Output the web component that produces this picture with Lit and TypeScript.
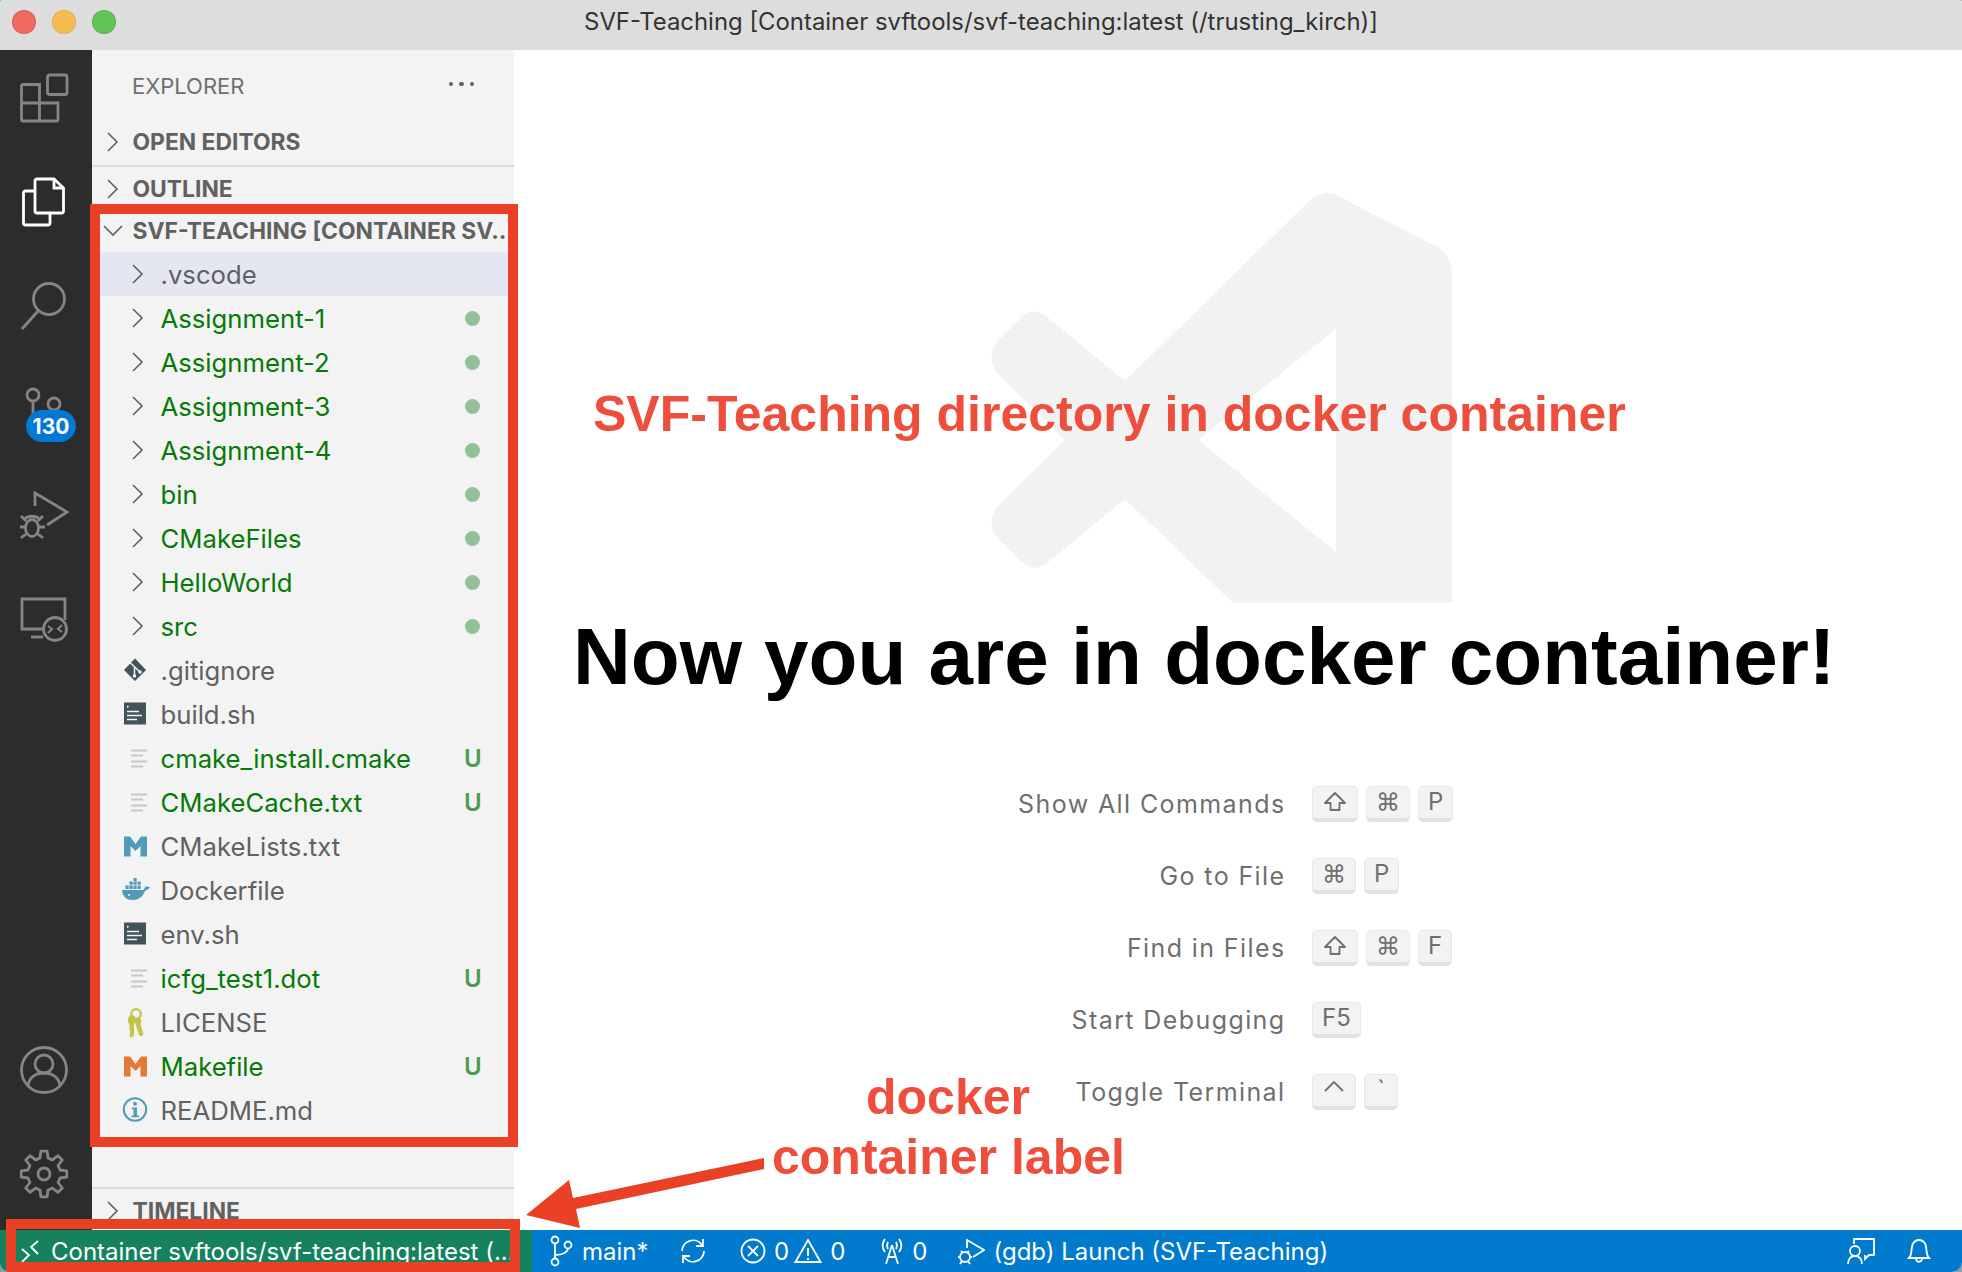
import { LitElement, html, css, svg } from "lit";
import { customElement } from "lit/decorators.js";

const chevR = html`<svg class="chev" width="14" height="22" viewBox="0 0 14 22"><path d="M2 2l9 9-9 9" fill="none" stroke="#616161" stroke-width="1.6"/></svg>`;
const chevD = html`<svg class="chev cd" width="20" height="14" viewBox="0 0 20 14"><path d="M1 2l9 9 9-9" fill="none" stroke="#616161" stroke-width="1.6"/></svg>`;

const iGit = svg`<path d="M16 4.500L27 16 16 27 5 16z" fill="#41535b"/><path d="M11.500 9l9.500 9M15.500 13v9" stroke="#f3f3f3" stroke-width="1.500" fill="none"/><circle cx="15.500" cy="22" r="1.800" fill="#f3f3f3"/><circle cx="21" cy="18" r="1.800" fill="#f3f3f3"/>`;
const iShell = svg`<rect x="5" y="4.500" width="22" height="22" fill="#41535b"/><path d="M8 7.500l2.500 1.300L8 10z" fill="#f3f3f3"/><path d="M8 13.500h12M8 17.500h15M8 21.500h10" stroke="#f3f3f3" stroke-width="1.500"/>`;
const iLines = svg`<path d="M12 8.500h16M12 13.500h12M12 19.500h16M12 24.500h12" stroke="#c8c8c8" stroke-width="1.800"/>`;
const iM = (c: string) => svg`<path d="M5 26.500V6.500h6L16.500 14 22 6.500h6v20h-6.500V16l-5 5-5-5v10.500z" fill="${c}"/>`;
const iDocker = svg`<path d="M3 16h21c1 0 1.800-2.800 2.300-3.300 1.300-.6 3.300-.2 4.700.8-1.200 1.600-2.700 2.500-4.700 3-1.900 5-6 9.500-12.300 9.500C8 26 3.500 23 3 16z" fill="#519aba"/><path d="M6.500 11.500h3.200v3.500H6.500zM10.500 11.500h3.200v3.500h-3.200zM14.500 11.500h3.200v3.500h-3.200zM18.500 11.500h3.200v3.500h-3.200zM10.500 7.500h3.200v3.300h-3.200zM14.500 7.500h3.200v3.300h-3.200zM18.500 7.500h3.200v3.300h-3.200zM14.500 4h3.200v3h-3.200z" fill="#519aba"/><circle cx="10" cy="21" r="1" fill="#f3f3f3"/>`;
const iKey = svg`<circle cx="17" cy="8" r="4.800" fill="none" stroke="#c4c446" stroke-width="2.200"/><path d="M9 14c0-3 2-5 4-5s3.500 2 3.500 5c0 2-1 3-1.500 4v11l-2.500 3-2-2v-1l1-1-1-1 1-1.500-1-1.500v-5C9.500 17 9 16 9 14z" fill="#c4c446"/><path d="M16 14c1-3 5-3 6 0 .5 1.500 0 3-.5 4l3 10-2 2.500-2.500-1.500-3.500-11c-.5-1-1-2.500-.5-4z" fill="#c4c446"/>`;
const iInfo = svg`<circle cx="16" cy="15.500" r="11.200" fill="none" stroke="#519aba" stroke-width="2"/><circle cx="16" cy="9.800" r="2" fill="#519aba"/><path d="M12.800 13.500H18v8h2v1.800h-7.500v-1.800h2v-6.200h-1.700z" fill="#519aba"/>`;
const ic = (p: unknown) => html`<svg class="ficon" width="32" height="32" viewBox="0 0 32 32">${p}</svg>`;

const gearPath = (() => {
  const n = 8, ro = 23, ri = 16.500, cx = 24, cy = 24;
  const pts: string[] = [];
  for (let i = 0; i < n; i++) {
    const a = (i * 2 * Math.PI) / n - Math.PI / 2;
    const s = Math.PI / n;
    const p = (r: number, t: number) => `${(cx + r * Math.cos(t)).toFixed(1)} ${(cy + r * Math.sin(t)).toFixed(1)}`;
    pts.push(p(ri, a - s * 0.62), p(ro, a - s * 0.34), p(ro, a + s * 0.34), p(ri, a + s * 0.62));
  }
  return "M" + pts.join("L") + "Z";
})();

const shiftI = html`<svg width="26" height="24" viewBox="0 0 26 24"><path d="M13 3L3 13h5.500v7h9v-7H23z" fill="none" stroke="#6f6f6f" stroke-width="1.800" stroke-linejoin="round"/></svg>`;
const ctrlI = html`<svg width="24" height="24" viewBox="0 0 24 24"><path d="M3 13l9-9 9 9" fill="none" stroke="#6f6f6f" stroke-width="1.800"/></svg>`;

type Row = { n: string; folder?: boolean; icon?: unknown; g?: boolean; d?: "dot" | "U"; sel?: boolean };
const rows: Row[] = [
  { n: ".vscode", folder: true, sel: true },
  { n: "Assignment-1", folder: true, g: true, d: "dot" },
  { n: "Assignment-2", folder: true, g: true, d: "dot" },
  { n: "Assignment-3", folder: true, g: true, d: "dot" },
  { n: "Assignment-4", folder: true, g: true, d: "dot" },
  { n: "bin", folder: true, g: true, d: "dot" },
  { n: "CMakeFiles", folder: true, g: true, d: "dot" },
  { n: "HelloWorld", folder: true, g: true, d: "dot" },
  { n: "src", folder: true, g: true, d: "dot" },
  { n: ".gitignore", icon: iGit },
  { n: "build.sh", icon: iShell },
  { n: "cmake_install.cmake", icon: iLines, g: true, d: "U" },
  { n: "CMakeCache.txt", icon: iLines, g: true, d: "U" },
  { n: "CMakeLists.txt", icon: iM("#519aba") },
  { n: "Dockerfile", icon: iDocker },
  { n: "env.sh", icon: iShell },
  { n: "icfg_test1.dot", icon: iLines, g: true, d: "U" },
  { n: "LICENSE", icon: iKey },
  { n: "Makefile", icon: iM("#e37933"), g: true, d: "U" },
  { n: "README.md", icon: iInfo },
];

const shortcuts: [string, unknown[]][] = [
  ["Show All Commands", [shiftI, "⌘", "P"]],
  ["Go to File", ["⌘", "P"]],
  ["Find in Files", [shiftI, "⌘", "F"]],
  ["Start Debugging", ["F5"]],
  ["Toggle Terminal", [ctrlI, "`"]],
];

@customElement("app-root")
export class AppRoot extends LitElement {
  static styles = css`
    :host { display: block; width: 1962px; height: 1272px; background: #9a9a9a; overflow: hidden; }
    * { box-sizing: border-box; }
    .win { position: relative; width: 1962px; height: 1272px; display: flex; flex-direction: column; overflow: hidden; background: #fff;
      border-radius: 3px 3px 10px 10px; font-family: Inter, "Liberation Sans", sans-serif; color: #616161; }
    .title { height: 50px; flex: none; background: #dddddd; display: flex; align-items: center; justify-content: center; position: relative; font-size: 23.900px; color: #333; padding-bottom: 8px; }
    .lights { position: absolute; left: 12px; top: 10px; display: flex; gap: 16px; }
    .lights i { width: 24px; height: 24px; border-radius: 50%; display: block; box-shadow: inset 0 0 0 1px rgba(0,0,0,.1); }
    .l1 { background: #ee6a5f; }
    .l2 { background: #f5bd4f; }
    .l3 { background: #61c454; }
    .main { flex: 1; display: flex; min-height: 0; }
    .act { width: 92px; flex: none; background: #2c2c2c; display: flex; flex-direction: column; justify-content: space-between; padding: 0 4px 8px 0; }
    .act .grp { display: flex; flex-direction: column; gap: 8.200px; }
    .act .bot { gap: 8px; }
    .slot { height: 96px; display: flex; align-items: center; justify-content: center; position: relative; }
    .slot svg { fill: none; stroke: #858585; stroke-width: 2.800; overflow: visible; }
    .slot.on svg { stroke: #fff; }
    .badge { position: absolute; left: 26px; top: 47.500px; width: 50px; height: 32px; border-radius: 16px; background: #0078d4; color: #fff; font-size: 21px; font-weight: 700; display: flex; align-items: center; justify-content: center; }
    .side { width: 422px; flex: none; background: #f3f3f3; display: flex; flex-direction: column; overflow: hidden; }
    .exp { height: 68px; flex: none; display: flex; align-items: center; justify-content: space-between; padding: 4px 40px 0 40px; font-size: 22px; color: #6f6f6f; }
    .dots { display: flex; gap: 6px; margin-top: -4px; }
    .dots i { width: 4.500px; height: 4.500px; border-radius: 50%; background: #616161; display: block; }
    .sec { height: 44px; flex: none; display: flex; align-items: center; font-size: 22.850px; font-weight: 700; color: #616161; white-space: nowrap; padding-left: 14px; }
    .sec .cw { width: 26.500px; flex: none; display: flex; align-items: center; }
    .cd { margin-left: -3px; }
    .sec.rule { border-bottom: 2px solid #dcdcdc; height: 49px; }
    .sec.second { height: 43px; }
    .sec.root { height: 42px; }
    .fill { flex: 1; }
    .sec.rule-top { border-top: 2px solid #dcdcdc; height: 46px; margin-bottom: -3px; }
    .row { height: 44px; flex: none; display: flex; align-items: center; padding: 0 34px 0 27px; font-size: 25.700px; white-space: nowrap; }
    .row.sel { background: #e4e6f1; }
    .row.g { color: #067a06; }
    .lead { width: 32px; flex: none; display: flex; align-items: center; justify-content: center; margin-right: 9.500px; }
    .lead .chev { margin-left: 6px; }
    .row .nm { flex: 1; }
    .dot { width: 15px; height: 15px; border-radius: 50%; background: #93c096; }
    .u { color: #4a9d50; font-size: 24px; font-weight: 600; width: 16px; text-align: right; }
    .editor { flex: 1; position: relative; background: #fff; }
    .mark { position: absolute; left: 475px; top: 143px; overflow: visible; }
    .keys { position: absolute; left: 0; right: 0; top: 736px; display: flex; flex-direction: column; gap: 36px; }
    .kr { height: 36px; display: flex; align-items: center; }
    .kl { width: 771.500px; text-align: right; font-size: 25px; letter-spacing: 1.400px; color: #6f6f6f; margin-right: 26.500px; flex: none; }
    .kk { display: flex; gap: 8px; }
    kbd { display: flex; height: 36px; align-items: center; justify-content: center; padding: 0 9px 2px; min-width: 34px; background: #f3f3f3; border: 1px solid #e8e8e8; border-bottom: 4px solid #e2e2e2; border-radius: 5px; font-family: Inter, "DejaVu Sans", sans-serif; font-size: 24px; color: #6f6f6f; }
    .status { height: 42px; flex: none; display: flex; background: #007acc; color: #fff; font-size: 24px; white-space: nowrap; align-items: center; }
    .remote { width: 532px; height: 100%; background: #16825d; display: flex; align-items: center; padding-left: 20px; gap: 11px; overflow: hidden; flex: none; }
    .si { display: flex; align-items: center; gap: 8px; }
    .si svg { fill: none; stroke: #fff; stroke-width: 1.800; flex: none; }
    .left { display: flex; align-items: center; padding-left: 18px; flex: 1; }
    .sync { margin-left: 29.500px; }
    .err { margin-left: 32px; }
    .warn { margin-left: 5px; }
    .radio { margin-left: 35px; }
    .dbg { margin-left: 30px; }
    .right { display: flex; align-items: center; gap: 32px; padding-right: 31px; }
    .box { position: absolute; border: 10px solid #ea4126; pointer-events: none; }
    .b1 { left: 90px; top: 204px; width: 428px; height: 943px; }
    .b2 { left: 6px; top: 1219px; width: 514px; height: 53px; }
    .anno { position: absolute; font-family: "Liberation Sans", Arial, sans-serif; font-weight: 700; white-space: nowrap; line-height: 1; color: #ee4f3d; }
    .a1 { left: 593px; top: 389px; font-size: 50px; }
    .a2 { left: 573px; top: 617px; font-size: 80px; color: #000; }
    .a3 { left: 866px; top: 1072px; font-size: 50px; }
    .a4 { left: 772px; top: 1132px; font-size: 50px; }
    .arrow { position: absolute; left: 0; top: 0; pointer-events: none; }
  `;

  render() {
    return html`<div class="win">
      <div class="title">
        <div class="lights"><i class="l1"></i><i class="l2"></i><i class="l3"></i></div>
        SVF-Teaching [Container svftools/svf-teaching:latest (/trusting_kirch)]
      </div>
      <div class="main">
        <nav class="act">
          <div class="grp">
            <div class="slot"><svg width="48" height="48" viewBox="0 0 48 48"><path d="M3 10.500h16.500V47H3a1.500 1.500 0 0 1-1.500-1.500V12A1.500 1.500 0 0 1 3 10.500zM1.500 29H38v16.500a1.500 1.500 0 0 1-1.500 1.500h-17"/><rect x="27.500" y="1" width="19.500" height="19.500" rx="2"/></svg></div>
            <div class="slot on"><svg width="44" height="50" viewBox="0 0 44 50"><path d="M15 2h17l9.500 9v23a2 2 0 0 1-2 2H15a2 2 0 0 1-2-2V4a2 2 0 0 1 2-2z"/><path d="M32 2v9h9.500"/><path d="M13 14H3.500a2 2 0 0 0-2 2v30a2 2 0 0 0 2 2H26a2 2 0 0 0 2-2v-10"/></svg></div>
            <div class="slot"><svg width="48" height="48" viewBox="0 0 48 48"><circle cx="29" cy="17" r="15.500"/><path d="M18 29L2 47"/></svg></div>
            <div class="slot"><svg width="48" height="48" viewBox="0 0 48 48"><circle cx="13" cy="8" r="6"/><circle cx="34" cy="17" r="6"/><path d="M13 14v30M13 34c10 0 21-2 21-11"/></svg><span class="badge">130</span></div>
            <div class="slot"><svg width="50" height="50" viewBox="0 0 50 50"><path d="M16 16V3l32 19-20 13"/><ellipse cx="13" cy="38" rx="6.500" ry="8.500"/><path d="M6.500 28.500c2-3 11-3 13 0M1 37h5.500M19.500 37H26M2 48l5-4M24 48l-5-4M2 26l5 5M24 26l-5 5"/></svg></div>
            <div class="slot"><svg width="48" height="48" viewBox="0 0 48 48"><path d="M23 34H2V4h43v21"/><path d="M11 42h12"/><circle cx="35" cy="34" r="11.500"/><path d="M28 38l4-4-4-3M42 30l-4 4 4 3" stroke-width="2"/></svg></div>
          </div>
          <div class="grp bot">
            <div class="slot"><svg width="48" height="48" viewBox="0 0 48 48"><circle cx="24" cy="24" r="22.500"/><circle cx="24" cy="18" r="9"/><path d="M8 40c1-9 8-13 16-13s15 4 16 13"/></svg></div>
            <div class="slot"><svg width="48" height="48" viewBox="0 0 48 48"><path d="${gearPath}" stroke-linejoin="round"/><circle cx="24" cy="24" r="6"/></svg></div>
          </div>
        </nav>
        <aside class="side">
          <div class="exp">EXPLORER<span class="dots"><i></i><i></i><i></i></span></div>
          <div class="sec rule"><span class="cw">${chevR}</span>OPEN EDITORS</div>
          <div class="sec second"><span class="cw">${chevR}</span>OUTLINE</div>
          <div class="sec root"><span class="cw">${chevD}</span><span class="txt">SVF-TEACHING [CONTAINER SV...</span></div>
          ${rows.map(
            (r) => html`<div class="row ${r.g ? "g" : ""} ${r.sel ? "sel" : ""}">
              <span class="lead">${r.folder ? chevR : ic(r.icon)}</span>
              <span class="nm">${r.n}</span>
              ${r.d === "dot" ? html`<span class="dot"></span>` : r.d === "U" ? html`<span class="u">U</span>` : ""}
            </div>`
          )}
          <div class="fill"></div>
          <div class="sec rule-top"><span class="cw">${chevR}</span>TIMELINE</div>
        </aside>
        <section class="editor">
          <svg class="mark" width="463" height="410" viewBox="0 0 463 410"><path fill="#f2f2f2" fill-rule="evenodd" d="M136 188L319 9Q338 -6 351 4L448 54Q463 63 463 82V410H244L136 306L58 370Q45 380 33 369L8 345Q-3 330 8 314L76 247L8 180Q-3 164 8 149L33 124Q45 113 58 124ZM347 136V359L209 247Z"/></svg>
          <div class="keys">
            ${shortcuts.map(
              ([l, ks]) => html`<div class="kr"><span class="kl">${l}</span><span class="kk">${ks.map((k) => html`<kbd>${k}</kbd>`)}</span></div>`
            )}
          </div>
        </section>
      </div>
      <footer class="status">
        <div class="remote"><svg width="20" height="24" viewBox="0 0 20 24" fill="none" stroke="#fff" stroke-width="1.800"><path d="M2 10l7 6-7 7M18 2l-7 6 7 7"/></svg><span>Container svftools/svf-teaching:latest (...</span></div>
        <div class="left">
          <span class="si"><svg width="24" height="32" viewBox="0 0 24 32"><circle cx="5" cy="5" r="3.500"/><circle cx="18" cy="10" r="3.500"/><circle cx="5" cy="27" r="3.500"/><path d="M5 9v14M5 20c8 0 13-3 13-7"/></svg>main*</span>
          <span class="si sync"><svg width="30" height="30" viewBox="0 0 30 30"><path d="M4 15a11 11 0 0 1 20-6M26 15a11 11 0 0 1-20 6M25 3v7h-7M5 27v-7h7"/></svg></span>
          <span class="si err"><svg width="26" height="26" viewBox="0 0 26 26"><circle cx="13" cy="13" r="11.500"/><path d="M8 8l10 10M18 8L8 18"/></svg>0</span>
          <span class="si warn"><svg width="28" height="26" viewBox="0 0 28 26"><path d="M14 2l12.500 22h-25zM14 10v8M14 20v2"/></svg>0</span>
          <span class="si radio"><svg width="24" height="28" viewBox="0 0 24 28"><path d="M12 8L6 27M12 8l6 19M8 20h8M5 2C2 6 2 11 5 15M19 2c3 4 3 9 0 13M8 5c-1 2-1 5 0 7M16 5c1 2 1 5 0 7"/></svg>0</span>
          <span class="si dbg"><svg width="28" height="28" viewBox="0 0 28 28"><path d="M10 11V3l17 10-11 7"/><circle cx="8" cy="20" r="5"/><path d="M1 20h3M12 20h3M3 27l2-3M13 27l-2-3M4 14l2 2M12 14l-2 2"/></svg>(gdb) Launch (SVF-Teaching)</span>
        </div>
        <div class="right">
          <span class="si"><svg width="28" height="26" viewBox="0 0 28 26"><path d="M7 6V1h20v16h-5l-4 4v-4"/><circle cx="8" cy="13" r="5"/><path d="M1 26c0-5 3-8 7-8s7 3 7 8"/></svg></span>
          <span class="si"><svg width="24" height="26" viewBox="0 0 24 26"><path d="M2 20c3-3 2-7 3-11a7 7 0 0 1 14 0c1 4 0 8 3 11zM9 20c0 5 6 5 6 0"/></svg></span>
        </div>
      </footer>
      <div class="box b1"></div>
      <div class="box b2"></div>
      <div class="anno a1">SVF-Teaching directory in docker container</div>
      <div class="anno a2">Now you are in docker container!</div>
      <div class="anno a3">docker</div>
      <div class="anno a4">container label</div>
      <svg class="arrow" width="1962" height="1272"><path d="M764 1158L573 1198L569 1180L526 1215L580 1228L576 1209L764 1169z" fill="#ea4126"/></svg>
    </div>`;
  }
}
